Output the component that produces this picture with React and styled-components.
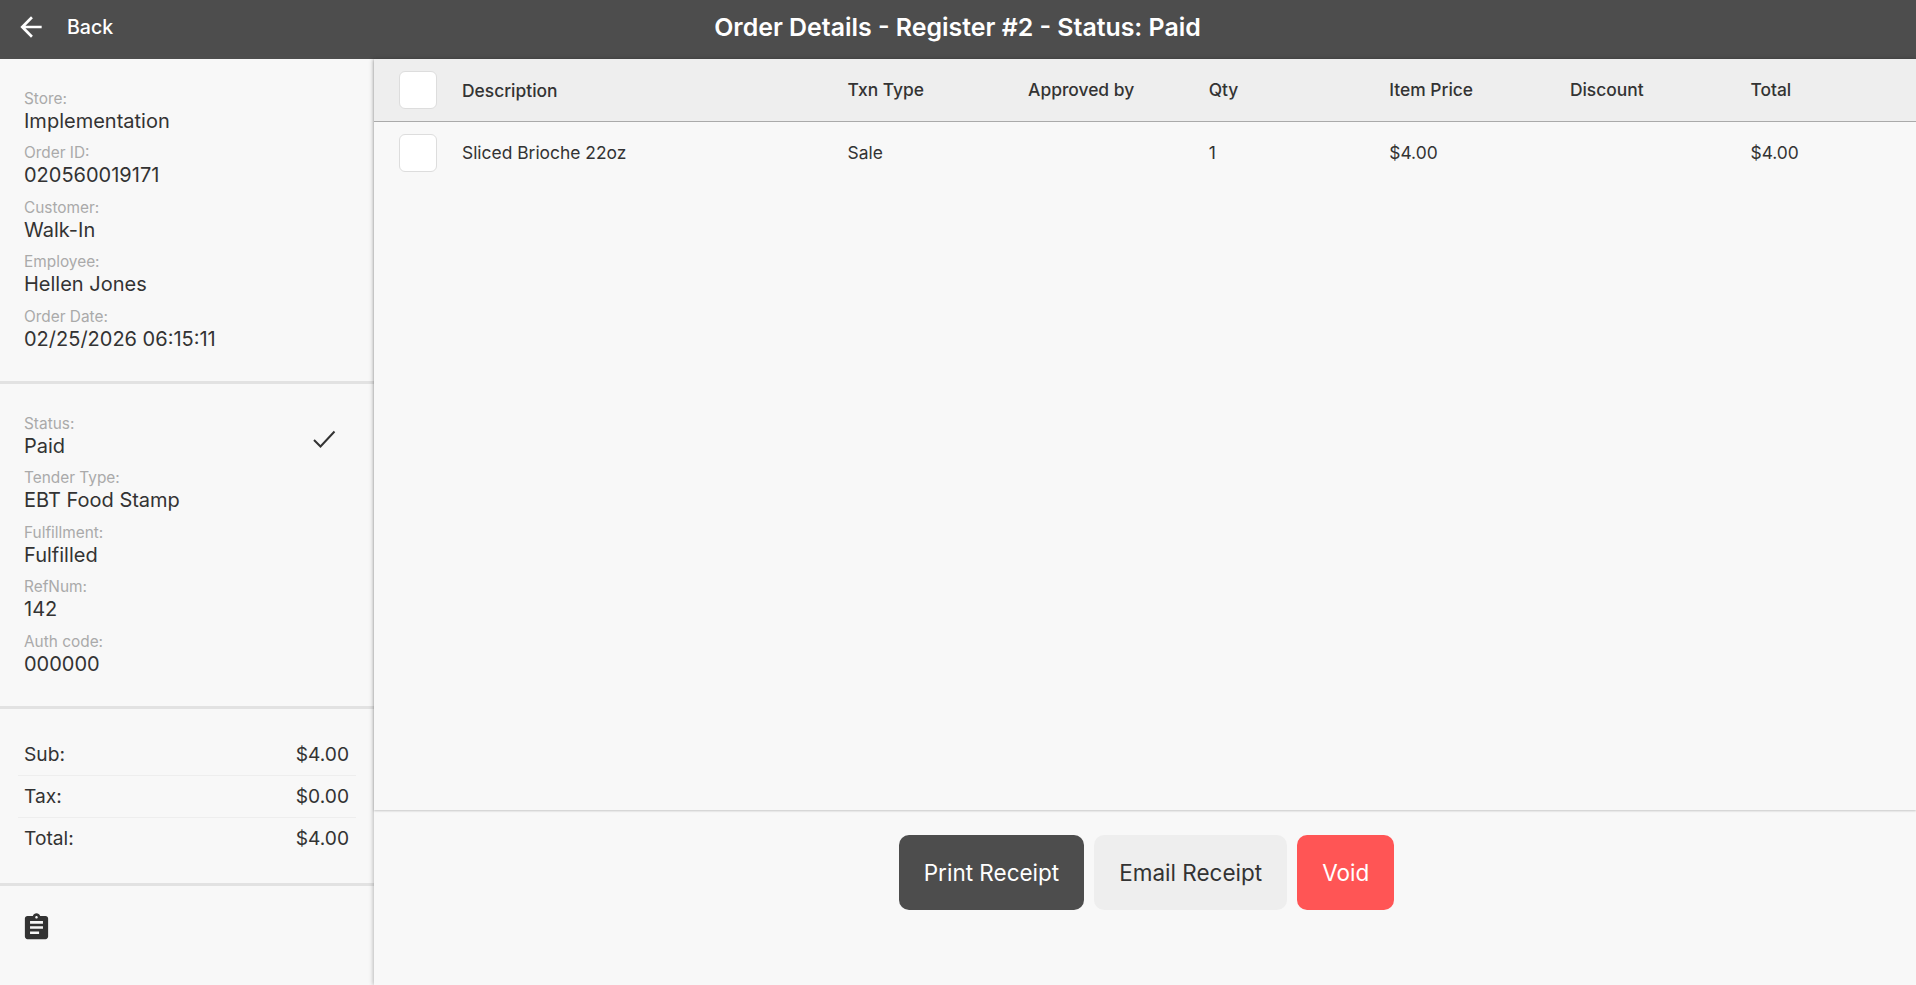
import styled, { createGlobalStyle } from 'styled-components';
import { MdArrowBack, MdAssignment } from 'react-icons/md';

const GlobalStyle = createGlobalStyle`
  html, body {
    margin: 0;
    height: 100%;
    background: #f8f8f8;
    color: #333;
    font-family: Inter, "Noto Sans", sans-serif;
  }
  * {
    box-sizing: border-box;
  }
`

const Page = styled.div`
  display: flex;
  flex-direction: column;
  height: 985px;
  overflow: hidden;
`

const Header = styled.header`
  display: grid;
  grid-template-columns: 1fr auto 1fr;
  align-items: center;
  flex: 0 0 59px;
  height: 59px;
  padding: 0 16px 5px 15px;
  background: #4d4d4d;
  color: #fff;
`

const BackButton = styled.div`
  display: flex;
  align-items: center;
  gap: 20px;
  font-size: 19.6px;
  font-weight: 500;
`

const Title = styled.h1`
  margin: 0;
  font-size: 24.9px;
  font-weight: 600;
`

const Body = styled.div`
  display: flex;
  flex: 1;
  min-height: 0;
`

const Sidebar = styled.aside`
  display: flex;
  flex-direction: column;
  width: 374px;
  flex: 0 0 374px;
`

const InfoSection = styled.section`
  display: flex;
  flex-direction: column;
  gap: 8.5px;
  height: ${(p) => p.$height}px;
  padding: ${(p) => p.$top}px 24px 0;
  border-bottom: 3px solid #e2e2e2;
  position: relative;
`

const Info = styled.div`
  display: flex;
  flex-direction: column;
`

const Label = styled.span`
  font-size: 15.4px;
  line-height: 17px;
  color: #aaa;
`

const Value = styled.span`
  font-size: 20px;
  line-height: 28px;
  height: 29px;
`

const StatusCheck = styled.svg`
  position: absolute;
  top: 45px;
  right: 38px;
  width: 24px;
  height: 20px;
`

const Totals = styled.section`
  display: flex;
  flex-direction: column;
  height: 177px;
  padding: 25px 18px 0;
  border-bottom: 3px solid #e2e2e2;
`

const TotalRow = styled.div`
  display: flex;
  justify-content: space-between;
  align-items: center;
  height: 42px;
  padding: 0 7px 2px 6px;
  font-size: 19.2px;
  border-bottom: 1px solid ${(p) => (p.$last ? 'transparent' : '#eee')};
`

const Notes = styled.div`
  padding: 26px 21px;
`

const Main = styled.main`
  display: flex;
  flex-direction: column;
  flex: 1;
  min-width: 0;
  background: #f8f8f8;
  box-shadow: -1px 0 4px rgba(0, 0, 0, 0.25);
  position: relative;
`

const TableArea = styled.div`
  flex: 0 0 751px;
  box-shadow: 0 1px 2px rgba(0, 0, 0, 0.2);
`

const Row = styled.div`
  display: grid;
  grid-template-columns: 448px repeat(5, 180.600px) 1fr;
  align-items: center;
  height: ${(p) => (p.$head ? '62px' : '61px')};
  margin-bottom: ${(p) => (p.$head ? '1px' : '0')};
  padding-left: 25px;
  background: ${(p) => (p.$head ? '#eee' : 'transparent')};
  box-shadow: ${(p) => (p.$head ? '0 1px 0 #aaa' : 'none')};
  font-size: 17.4px;
  font-weight: ${(p) => (p.$head ? 500 : 400)};
  > span {
    padding: 0 0 ${(p) => (p.$head ? '2px' : '0')} 0.5px;
  }
`

const Description = styled.div`
  display: flex;
  align-items: center;
  gap: 25px;
`

const Checkbox = styled.span`
  width: 38px;
  height: 38px;
  background: #fff;
  border: 1px solid #ddd;
  border-radius: 6px;
`

const Actions = styled.div`
  display: flex;
  justify-content: center;
  gap: 10px;
  padding: 25px 0 0 3px;
`

const Button = styled.button`
  height: 75px;
  padding: 0 25px;
  border: none;
  border-radius: 10px;
  font-family: inherit;
  font-size: 22.5px;
  background: ${(p) => p.$bg};
  color: ${(p) => p.$color};
`

const orderInfo = [
  ['Store:', 'Implementation'],
  ['Order ID:', '020560019171'],
  ['Customer:', 'Walk-In'],
  ['Employee:', 'Hellen Jones'],
  ['Order Date:', '02/25/2026 06:15:11'],
];

const paymentInfo = [
  ['Status:', 'Paid'],
  ['Tender Type:', 'EBT Food Stamp'],
  ['Fulfillment:', 'Fulfilled'],
  ['RefNum:', '142'],
  ['Auth code:', '000000'],
];

const columns = ['Txn Type', 'Approved by', 'Qty', 'Item Price', 'Discount', 'Total'];
const lineItem = ['Sale', '', '1', '$4.00', '', '$4.00'];

const InfoList = ({ items }) => items.map(([label, value]) => (
  <Info key={label}>
    <Label>{label}</Label>
    <Value>{value}</Value>
  </Info>
));

const App = () => {
  return (
    <Page>
      <GlobalStyle />
      <Header>
        <BackButton>
          <MdArrowBack size={32} />
          Back
        </BackButton>
        <Title>Order Details - Register #2 - Status: Paid</Title>
      </Header>
      <Body>
        <Sidebar>
          <InfoSection $height={325} $top={30.5}>
            <InfoList items={orderInfo} />
          </InfoSection>
          <InfoSection $height={325} $top={30.5}>
            <InfoList items={paymentInfo} />
            <StatusCheck viewBox="0 0 24 20" fill="none" stroke="#333" strokeWidth="2">
              <path d="M2 11l6.5 6.5L22.500 2.500" />
            </StatusCheck>
          </InfoSection>
          <Totals>
            <TotalRow><span>Sub:</span><span>$4.00</span></TotalRow>
            <TotalRow><span>Tax:</span><span>$0.00</span></TotalRow>
            <TotalRow $last><span>Total:</span><span>$4.00</span></TotalRow>
          </Totals>
          <Notes>
            <MdAssignment size={31} />
          </Notes>
        </Sidebar>
        <Main>
          <TableArea>
            <Row $head>
              <Description><Checkbox />Description</Description>
              {columns.map((c) => <span key={c}>{c}</span>)}
            </Row>
            <Row>
              <Description><Checkbox />Sliced Brioche 22oz</Description>
              {lineItem.map((c, i) => <span key={i}>{c}</span>)}
            </Row>
          </TableArea>
          <Actions>
            <Button $bg="#4d4d4d" $color="#fff">Print Receipt</Button>
            <Button $bg="#eee" $color="#333">Email Receipt</Button>
            <Button $bg="#ff5555" $color="#fff">Void</Button>
          </Actions>
        </Main>
      </Body>
    </Page>
  );
}

export default App;
